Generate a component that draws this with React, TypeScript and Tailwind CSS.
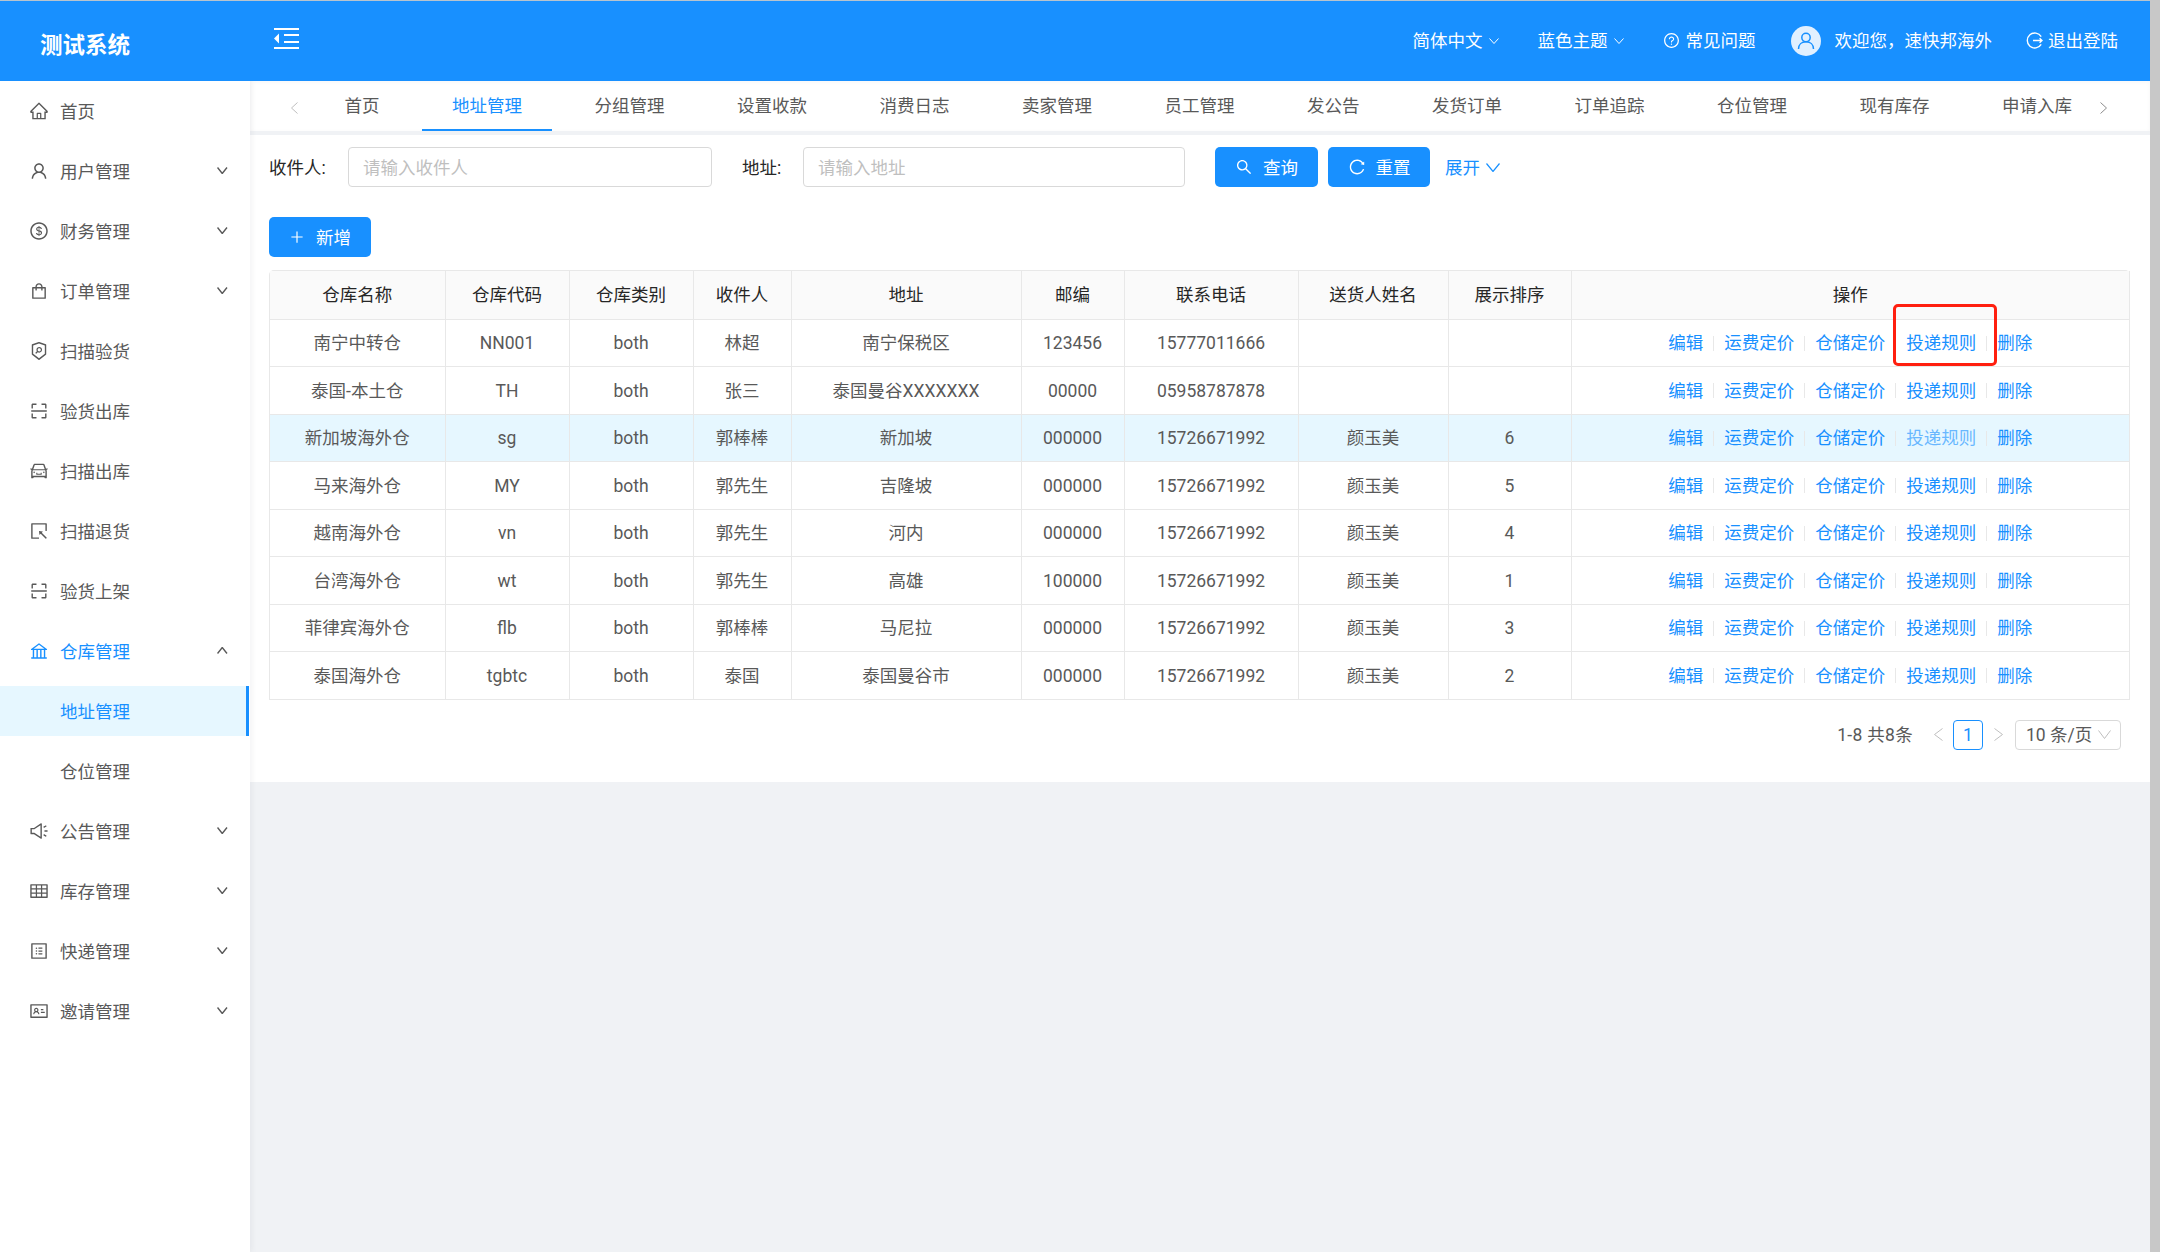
import type { ReactNode } from 'react';
import {
  AiOutlineHome,
  AiOutlineUser,
  AiOutlineDollarCircle,
  AiOutlineShopping,
  AiOutlineSecurityScan,
  AiOutlineScan,
  AiOutlineCar,
  AiOutlineSelect,
  AiOutlineBank,
  AiOutlineSound,
  AiOutlineTable,
  AiOutlineProfile,
  AiOutlineIdcard,
  AiOutlineSearch,
  AiOutlineReload,
  AiOutlinePlus,
  AiOutlineQuestionCircle,
} from 'react-icons/ai';

interface MenuEntry {
  label: string;
  icon?: ReactNode;
  caret?: 'down' | 'up';
  active?: boolean;
  selected?: boolean;
}

const menu: MenuEntry[] = [
  { label: '首页', icon: <AiOutlineHome /> },
  { label: '用户管理', icon: <AiOutlineUser />, caret: 'down' },
  { label: '财务管理', icon: <AiOutlineDollarCircle />, caret: 'down' },
  { label: '订单管理', icon: <AiOutlineShopping />, caret: 'down' },
  { label: '扫描验货', icon: <AiOutlineSecurityScan /> },
  { label: '验货出库', icon: <AiOutlineScan /> },
  { label: '扫描出库', icon: <AiOutlineCar /> },
  { label: '扫描退货', icon: <AiOutlineSelect /> },
  { label: '验货上架', icon: <AiOutlineScan /> },
  { label: '仓库管理', icon: <AiOutlineBank />, caret: 'up', active: true },
  { label: '地址管理', selected: true },
  { label: '仓位管理' },
  { label: '公告管理', icon: <AiOutlineSound />, caret: 'down' },
  { label: '库存管理', icon: <AiOutlineTable />, caret: 'down' },
  { label: '快递管理', icon: <AiOutlineProfile />, caret: 'down' },
  { label: '邀请管理', icon: <AiOutlineIdcard />, caret: 'down' },
];

const tabs = ['首页', '地址管理', '分组管理', '设置收款', '消费日志', '卖家管理', '员工管理', '发公告', '发货订单', '订单追踪', '仓位管理', '现有库存', '申请入库'];

const columns = [
  { title: '仓库名称', width: 'w-[175px]' },
  { title: '仓库代码', width: 'w-[124px]' },
  { title: '仓库类别', width: 'w-[124px]' },
  { title: '收件人', width: 'w-[98px]' },
  { title: '地址', width: 'w-[230px]' },
  { title: '邮编', width: 'w-[103px]' },
  { title: '联系电话', width: 'w-[174px]' },
  { title: '送货人姓名', width: 'w-[150px]' },
  { title: '展示排序', width: 'w-[123px]' },
  { title: '操作', width: 'w-auto' },
];

const rows = [
  ['南宁中转仓', 'NN001', 'both', '林超', '南宁保税区', '123456', '15777011666', '', ''],
  ['泰国-本土仓', 'TH', 'both', '张三', '泰国曼谷XXXXXXX', '00000', '05958787878', '', ''],
  ['新加坡海外仓', 'sg', 'both', '郭棒棒', '新加坡', '000000', '15726671992', '颜玉美', '6'],
  ['马来海外仓', 'MY', 'both', '郭先生', '吉隆坡', '000000', '15726671992', '颜玉美', '5'],
  ['越南海外仓', 'vn', 'both', '郭先生', '河内', '000000', '15726671992', '颜玉美', '4'],
  ['台湾海外仓', 'wt', 'both', '郭先生', '高雄', '100000', '15726671992', '颜玉美', '1'],
  ['菲律宾海外仓', 'flb', 'both', '郭棒棒', '马尼拉', '000000', '15726671992', '颜玉美', '3'],
  ['泰国海外仓', 'tgbtc', 'both', '泰国', '泰国曼谷市', '000000', '15726671992', '颜玉美', '2'],
];

// thin chevrons, sized per use
function Chevron({ dir, w, h, sw = 1, className }: { dir: 'up' | 'down' | 'left' | 'right'; w: number; h: number; sw?: number; className?: string }) {
  const d = {
    down: `M0.5 0.5L${w / 2} ${h - 0.5}L${w - 0.5} 0.5`,
    up: `M0.5 ${h - 0.5}L${w / 2} 0.5L${w - 0.5} ${h - 0.5}`,
    left: `M${w - 0.5} 0.5L0.5 ${h / 2}L${w - 0.5} ${h - 0.5}`,
    right: `M0.5 0.5L${w - 0.5} ${h / 2}L0.5 ${h - 0.5}`,
  }[dir];
  return (
    <svg className={`shrink-0 ${className ?? ''}`} width={w} height={h} viewBox={`0 0 ${w} ${h}`} fill="none" stroke="currentColor" strokeWidth={sw}>
      <path d={d} />
    </svg>
  );
}

function Sidebar() {
  return (
    <aside className="w-[250px] shrink-0 bg-white pt-[5px] shadow-[2px_0_6px_rgba(0,21,41,0.05)] z-10">
      {menu.map((item) => (
        <div
          key={item.label}
          className={
            item.selected
              ? 'flex items-center h-[50px] mb-[10px] mr-px pl-[60px] pt-[2px] bg-[#e6f7ff] border-r-[3px] border-[#1890ff] text-[#1890ff]'
              : item.active
                ? 'flex items-center h-[50px] mb-[10px] pl-[30px] pt-[2px] text-[#1890ff]'
                : 'flex items-center h-[50px] mb-[10px] pl-[30px] pt-[2px] text-[#595959]'
          }
        >
          {item.icon && <span className="w-[20px] -ml-px mr-[11px] text-[20px] flex items-center -mt-[2px]">{item.icon}</span>}
          {!item.icon && !item.selected && <span className="w-[30px]" />}
          <span>{item.label}</span>
          {item.caret && <Chevron dir={item.caret} w={10.5} h={7} sw={1.4} className="ml-auto mr-[22.5px] -mt-[3px] text-[#595959]" />}
        </div>
      ))}
    </aside>
  );
}

function TopBar() {
  return (
    <header className="h-[80px] shrink-0 flex items-center bg-[#1890ff] text-white relative z-20">
      <div className="w-[250px] pl-[40px] text-[22.5px] font-bold pt-[7px]">测试系统</div>
      {/* collapse icon */}
      <svg className="ml-[24px] mb-[5px]" width="25" height="21" viewBox="0 0 25 21" fill="white">
        <rect x="0" y="0" width="25" height="2" />
        <rect x="10" y="6" width="15" height="2" />
        <rect x="10" y="13" width="15" height="2" />
        <rect x="0" y="19" width="25" height="2" />
        <path d="M5 5.5v10L0 10.5z" />
      </svg>
      <div className="ml-auto flex items-center pr-[32px] pb-[1px]">
        <span>简体中文</span>
        <Chevron dir="down" w={10} h={6} className="ml-[6px]" />
        <span className="ml-[39px]">蓝色主题</span>
        <Chevron dir="down" w={10} h={6} className="ml-[6px]" />
        <AiOutlineQuestionCircle className="ml-[39px] mr-[6px] text-[17px]" />
        <span>常见问题</span>
        <span className="ml-[35.5px] mr-[13.5px] mt-[1px] w-[30px] h-[30px] rounded-full bg-[#e1f0ff] flex items-center justify-center">
          <svg width="20" height="20" viewBox="0 0 20 20" fill="none" stroke="#1890ff" strokeWidth="1.5">
            <circle cx="10" cy="6.5" r="4.2" />
            <path d="M2.5 18c0-4.5 3.2-7.2 7.5-7.2s7.5 2.7 7.5 7.2" />
          </svg>
        </span>
        <span>欢迎您，速快邦海外</span>
        <svg className="ml-[34px] mr-[5px]" width="17" height="17" viewBox="0 0 17 17" fill="none" stroke="white" strokeWidth="1.4">
          <path d="M15.2 4.6A7.5 7.5 0 1 0 15.2 12.4" />
          <path d="M7 8.5h9M13.6 6.2l2.4 2.3-2.4 2.3" />
        </svg>
        <span>退出登陆</span>
      </div>
    </header>
  );
}

function TabBar() {
  return (
    <div className="h-[50px] shrink-0 flex items-center bg-white text-[#595959] shadow-[0_1px_4px_rgba(0,21,41,0.04)_inset]">
      <Chevron dir="left" w={7} h={12} className="ml-[41px] mr-[16.5px] mt-[4px] text-[#bfbfbf]" />
      <div className="flex gap-[12.5px] w-[1781.5px] shrink-0 overflow-hidden h-full">
        {tabs.map((tab) => (
          <div
            key={tab}
            className={
              tab === '地址管理'
                ? 'h-full px-[30px] pt-[2px] shrink-0 flex items-center text-[#1890ff] border-b-2 border-[#1890ff]'
                : 'h-full px-[30px] pt-[2px] shrink-0 flex items-center border-b-2 border-transparent'
            }
          >
            {tab}
          </div>
        ))}
      </div>
      <Chevron dir="right" w={7} h={12} className="ml-[4px] mt-[4px] text-[#8c8c8c]" />
    </div>
  );
}

function SearchForm() {
  return (
    <div className="flex items-center h-[40px]">
      <span className="text-[#262626] w-[79px] pt-[2px]">收件人:</span>
      <input
        placeholder="请输入收件人"
        className="w-[364px] h-[40px] px-[14px] pt-[2px] border border-[#d9d9d9] rounded-[4px] bg-white placeholder:text-[#bfbfbf] outline-none"
      />
      <span className="text-[#262626] ml-[30px] w-[61px] pt-[2px]">地址:</span>
      <input
        placeholder="请输入地址"
        className="w-[382px] h-[40px] px-[14px] pt-[2px] border border-[#d9d9d9] rounded-[4px] bg-white placeholder:text-[#bfbfbf] outline-none"
      />
      <button className="ml-[30px] w-[103px] h-[40px] pt-[2px] flex items-center justify-center gap-[10px] rounded-[5px] bg-[#1890ff] text-white">
        <AiOutlineSearch className="text-[18px] -mt-[2px]" />
        查询
      </button>
      <button className="ml-[10px] w-[102px] h-[40px] pt-[2px] flex items-center justify-center gap-[10px] rounded-[5px] bg-[#1890ff] text-white">
        <AiOutlineReload className="text-[18px] -mt-[2px]" />
        重置
      </button>
      <span className="ml-[15px] pt-[2px] text-[#1890ff] flex items-center gap-[6px]">
        展开
        <Chevron dir="down" w={14} h={9} sw={1.2} className="-mt-[1px]" />
      </span>
    </div>
  );
}

function Actions({ hover, marked }: { hover: boolean; marked: boolean }) {
  const links = ['编辑', '运费定价', '仓储定价', '投递规则', '删除'];
  return (
    <div className="flex items-center justify-center">
      {links.map((link, i) => (
        <div key={link} className="flex items-center">
          {i > 0 && <span className="w-px h-[15px] mx-[10px] bg-[#e8e8e8]" />}
          <span className={hover && link === '投递规则' ? 'relative text-[#69b7ff]' : 'relative text-[#1890ff]'}>
            {link}
            {marked && link === '投递规则' && (
              <span className="absolute -left-[13px] -right-[21px] -top-[27px] -bottom-[11px] border-[3px] border-[#ff1f0f] rounded-[5px]" />
            )}
          </span>
        </div>
      ))}
    </div>
  );
}

function DataTable() {
  return (
    <div className="mt-[13px] w-[1861px] border-l border-t border-[#e8e8e8] rounded-t-[5px] overflow-visible">
      <table className="w-full table-fixed border-collapse text-center">
        <colgroup>
          {columns.map((col) => (
            <col key={col.title} className={col.width} />
          ))}
        </colgroup>
        <thead>
          <tr className="h-[48px] bg-[#fafafa] text-[#262626]">
            {columns.map((col) => (
              <th key={col.title} className="font-normal border-r border-b border-[#e8e8e8] p-0 pt-[1px]">
                {col.title}
              </th>
            ))}
          </tr>
        </thead>
        <tbody className="text-[#595959]">
          {rows.map((row, r) => (
            <tr key={row[0]} className={r === 2 ? 'h-[47.5px] bg-[#e6f7ff]' : 'h-[47.5px]'}>
              {row.map((cell, c) => (
                <td key={c} className="border-r border-b border-[#e8e8e8] p-0 pt-[1px]">
                  {cell}
                </td>
              ))}
              <td className="border-r border-b border-[#e8e8e8] p-0 pt-[1px]">
                <Actions hover={r === 2} marked={r === 0} />
              </td>
            </tr>
          ))}
        </tbody>
      </table>
    </div>
  );
}

function Pager() {
  return (
    <div className="mt-[20px] flex items-center justify-end h-[30px] pr-[10px] text-[#595959]">
      <span className="tracking-[0.3px]">1-8 共8条</span>
      <Chevron dir="left" w={9} h={13} className="ml-[21px] text-[#bfbfbf]" />
      <span className="ml-[10px] w-[30px] h-[30px] flex items-center justify-center border border-[#1890ff] rounded-[4px] text-[#1890ff]">1</span>
      <Chevron dir="right" w={9} h={13} className="ml-[11px] text-[#bfbfbf]" />
      <span className="ml-[12px] w-[106px] h-[30px] pl-[10px] flex items-center border border-[#d9d9d9] rounded-[4px]">
        10 条/页
        <Chevron dir="down" w={13} h={9} className="ml-[6px] text-[#bfbfbf]" />
      </span>
    </div>
  );
}

export default function App() {
  return (
    <div className="flex w-[2160px] h-[1252px] overflow-hidden bg-[#f0f2f5] text-[17.5px] leading-[24px] font-[Roboto,'Noto_Sans_CJK_SC',sans-serif]">
      <div className="w-[2150px] shrink-0 flex flex-col">
        <div className="h-px shrink-0 bg-[#b8c4ce]" />
        <TopBar />
        <div className="flex flex-1 min-h-0">
          <Sidebar />
          <main className="flex-1 min-w-0 flex flex-col">
            <TabBar />
            <div className="mt-[4px] h-[647px] shrink-0 bg-white px-[19px] pt-[12px]">
              <SearchForm />
              <button className="mt-[30px] w-[102px] h-[40px] pt-[2px] flex items-center justify-center gap-[11px] rounded-[5px] bg-[#1890ff] text-white">
                <AiOutlinePlus className="text-[16px] -mt-[2px]" />
                新增
              </button>
              <DataTable />
              <Pager />
            </div>
          </main>
        </div>
      </div>
      <div className="w-[10px] shrink-0 bg-[#c8c8c8]" />
    </div>
  );
}
